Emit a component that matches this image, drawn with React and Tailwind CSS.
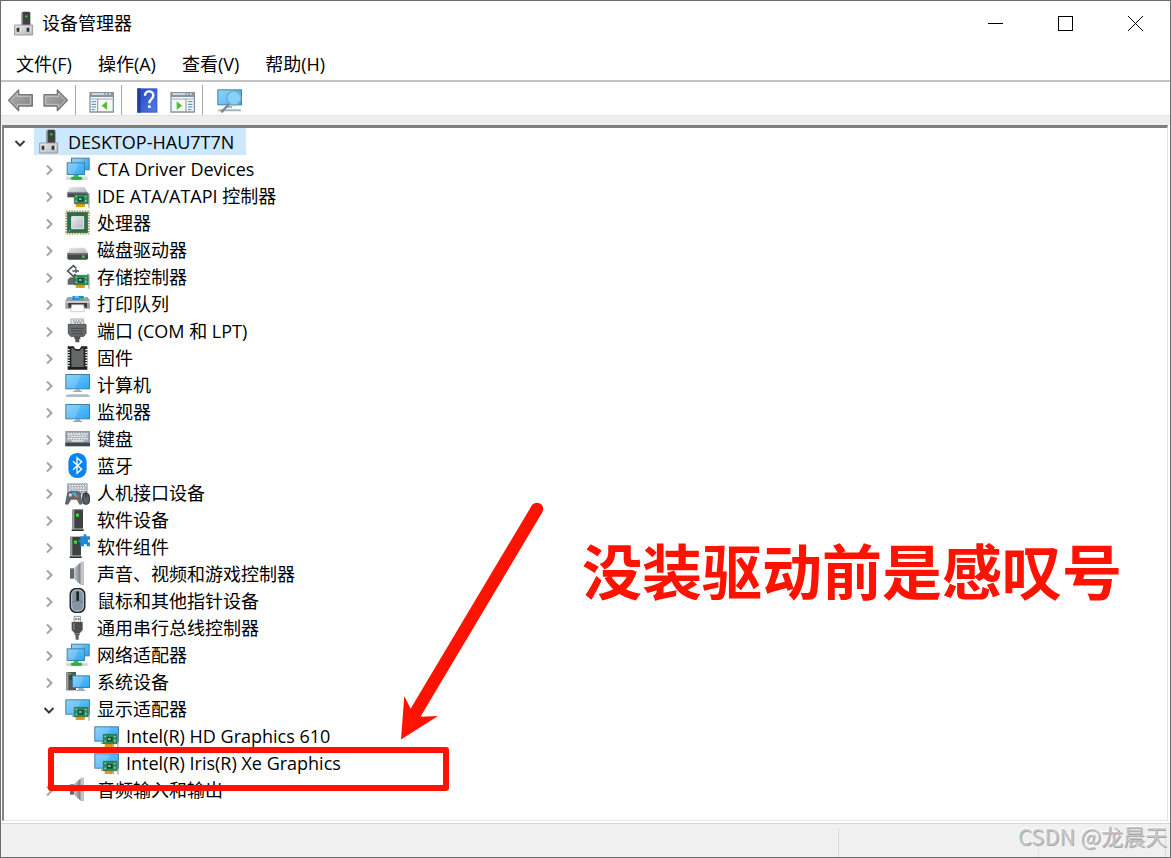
import { useState } from 'react';

const Icon = ({ children }) => (
  <svg viewBox="0 0 75 75" className="w-[25px] h-[25px] shrink-0" aria-hidden="true">
    {children}
  </svg>
);

const Screen = ({ x, y, w, h }) => (
  <>
    <rect x={x + 1.5} y={y + 1.5} width={w - 3} height={h - 3} fill="url(#screen)" stroke="#3f81a5" strokeWidth="3" />
    <path d={`M${x + 3} ${y + 3}h${w * 0.6}l-${w * 0.25} ${h - 6}h-${w * 0.35}z`} fill="#fff" opacity=".16" />
  </>
);

const Card = () => (
  <>
    <path d="M32 61h28v11H32z" fill="#f2a51c" />
    <path d="M38 63v9M45 63v9M52 63v9" stroke="#c97a08" strokeWidth="2" />
    <path d="M28 34h42v28H28z" fill="#2c8a5b" stroke="#1c6842" strokeWidth="2" />
    <path d="M39 42h17v14H39z" fill="#174c37" />
    <path d="M42 45h8v6h-8z" fill="#8bb3a0" />
    <path d="M31 38h5v4h-5zM31 53h5v4h-5zM60 39h5v4h-5zM60 50h5v6h-5z" fill="#7fd6a6" />
    <path d="M66 32h6v42" fill="none" stroke="#8b9299" strokeWidth="3" />
  </>
);

const ComputerIcon = () => (
  <Icon>
    <path d="M32 5l4-3h19l3 3v37H32z" fill="#3e4140" />
    <path d="M32 5l4-3v38h-4z" fill="#83878a" />
    <circle cx="46" cy="16" r="3.5" fill="#22d52e" />
    <path d="M11 42h54v30H11z" fill="url(#metal)" stroke="#989ca1" strokeWidth="3" />
    <path d="M17 50h9v12h-9zM47 50h9v12h-9z" fill="#343638" />
    <path d="M26 50h3v12h-3zM56 50h3v12h-3z" fill="#f6f6f6" />
  </Icon>
);

const NetworkIcon = () => (
  <Icon>
    <Screen x={18} y={5} w={56} h={38} />
    <Screen x={5} y={19} w={55} h={38} />
    <path d="M3 61h65v11H3z" fill="#d5d8da" />
    <path d="M3 61h65v3H3z" fill="#eef0f1" />
    <path d="M26 57h15v5h8l4 5-4 5H20l-4-5 4-5h6z" fill="#38bd53" />
    <path d="M22 66h26" stroke="#1b9a39" strokeWidth="3" />
  </Icon>
);

const IdeIcon = () => (
  <Icon>
    <path d="M15 12h44l9 16H7z" fill="url(#metal)" />
    <path d="M7 28h61v15H7z" fill="#474b4e" />
    <path d="M7 28h61v3H7z" fill="#85898c" />
    <Card />
  </Icon>
);

const CpuIcon = () => (
  <Icon>
    <rect x="3.5" y="4" width="69" height="67" fill="none" stroke="#c8a24c" strokeWidth="6" strokeDasharray="4 4" />
    <path d="M7 7h61v61H7z" fill="#2d6d50" stroke="#225940" strokeWidth="2" />
    <path d="M20 20h36v36H20z" fill="url(#metal)" stroke="#e9eeeb" strokeWidth="3" />
    <path d="M12 64l4-4" stroke="#d3c26c" strokeWidth="3" />
  </Icon>
);

const DiskIcon = () => (
  <Icon>
    <path d="M17 32h42l10 17H7z" fill="url(#metal)" />
    <path d="M7 49h62v16l-4 3H11l-4-3z" fill="#45494a" />
    <path d="M7 49h62v4H7z" fill="#75797a" />
    <circle cx="55" cy="59" r="4" fill="#34df42" />
  </Icon>
);

const StorageIcon = () => (
  <Icon>
    <path d="M8 47l8-7h20v22H8z" fill="#626668" />
    <path d="M34 13l-9-8L8 21l17 16 7-7" fill="none" stroke="#515456" strokeWidth="5" />
    <path d="M22 21h20M33 15v12" fill="none" stroke="#515456" strokeWidth="4" />
    <Card />
  </Icon>
);

const PrinterIcon = () => (
  <Icon>
    <path d="M23 15h33l4 17H19z" fill="#1687e9" />
    <path d="M30 15h10l3 7H28z" fill="#65c4ff" />
    <path d="M43 21h13l1 5H43z" fill="#31cb5c" />
    <path d="M8 18h12l3 9h33l4-9h8l7 11v24H1V29z" fill="#9ba1a6" />
    <path d="M1 30h74v6H1z" fill="#c7cbce" />
    <path d="M10 36h56v14H10z" fill="#373b3e" />
    <path d="M20 41h36l3 21H17z" fill="#fafafa" stroke="#b8bbbd" strokeWidth="2" />
  </Icon>
);

const PortIcon = () => (
  <Icon>
    <path d="M18 3h38v17H18z" fill="#eceeee" stroke="#a5a8aa" strokeWidth="3" />
    <path d="M24 9h4M32 9h4M40 9h4M48 9h4M28 14h4M36 14h4M44 14h4" stroke="#505355" strokeWidth="3" />
    <path d="M10 19h53v27l-7 9H17l-7-9z" fill="#6a6d6f" stroke="#4b4e50" strokeWidth="3" />
    <path d="M18 31h38M18 39h38M20 47h34" stroke="#45484a" strokeWidth="3" />
    <path d="M28 55h18v8h-3v10H31V63h-3z" fill="#505355" />
  </Icon>
);

const FirmwareIcon = () => (
  <Icon>
    <path d="M8 4h18l5 8h13l5-8h18v70H8z" fill="#1f2021" />
    <path d="M11 12v54M64 12v54" stroke="#fff" strokeWidth="6" strokeDasharray="4 4" />
    <path d="M19 10h6l6 7h13l6-7h6v56H19z" fill="#646667" />
  </Icon>
);

const DesktopIcon = () => (
  <Icon>
    <Screen x={1} y={6} w={74} h={46} />
    <path d="M31 52h14v4h6v4H24v-4h7z" fill="#9bb0bf" />
    <path d="M8 67h60l7 4-4 4H5l-4-4z" fill="#adbdca" />
  </Icon>
);

const MonitorIcon = () => (
  <Icon>
    <Screen x={1} y={15} w={74} h={46} />
    <path d="M31 61h14v4h6v4H24v-4h7z" fill="#91a6b5" />
  </Icon>
);

const KeyboardIcon = () => (
  <Icon>
    <path d="M1 15h74v45H1z" fill="#8d99a4" />
    <path d="M6 19h64v27H6z" fill="#aab4bc" />
    <path d="M8 24h60M11 31h55M8 38h60" stroke="#f5f7f8" strokeWidth="4" strokeDasharray="5 3" />
    <path d="M20 45h36" stroke="#fff" strokeWidth="3" />
    <path d="M1 50h74v11H1z" fill="#40464b" />
  </Icon>
);

const BluetoothIcon = () => (
  <Icon>
    <rect x="10" y="0" width="55" height="75" rx="26" fill="#0a83f5" />
    <path d="M24 25l26 24-14 12V14l14 12-26 24" fill="none" stroke="#fff" strokeWidth="4" />
  </Icon>
);

const HidIcon = () => (
  <Icon>
    <path d="M6 10h62v34H6z" fill="#a4adb5" />
    <path d="M12 17h52M14 24h49M12 31h52" stroke="#f8f8f8" strokeWidth="4" strokeDasharray="5 3" />
    <path d="M8 39l9-5h20l9 5 5 33-7 1-8-15H18l-9 15-8-1z" fill="#626970" stroke="#495057" strokeWidth="2" />
    <circle cx="16" cy="45" r="5" fill="#d3d7db" />
    <circle cx="28" cy="41" r="6" fill="#2dafec" />
    <circle cx="34" cy="48" r="4" fill="#ef7731" />
    <rect x="53" y="40" width="20" height="33" rx="9" fill="#586169" stroke="#292e32" strokeWidth="3" />
    <path d="M63 34v18" stroke="#252a2e" strokeWidth="3" />
  </Icon>
);

const SoftwareIcon = () => (
  <Icon>
    <path d="M22 8h32v57H22z" fill="#404343" />
    <path d="M22 8h6v58h-6z" fill="#9a9e9f" />
    <path d="M28 7h27v3H28z" fill="#6b6e6f" />
    <path d="M33 20h9v9h-9z" fill="#2ee83c" />
    <path d="M20 67h36v5H20z" fill="#2c2e2f" />
  </Icon>
);

const ComponentIcon = () => (
  <Icon>
    <path d="M16 8h32v57H16z" fill="#404343" />
    <path d="M16 8h6v58h-6z" fill="#9a9e9f" />
    <path d="M27 20h9v9h-9z" fill="#2ee83c" />
    <path d="M14 67h36v5H14z" fill="#2c2e2f" />
    <path d="M46 7h10V1h8v6h11v10h-6v8h6v12H65v-6h-8v6H46V25h-5v-8h5z" fill="#2388d0" />
  </Icon>
);

const SpeakerIcon = () => (
  <Icon>
    <path d="M15 22h12v31H15z" fill="#62686d" />
    <path d="M27 22L47 4v67L27 53z" fill="url(#cone)" />
    <path d="M48 2h8v70h-8z" fill="#9fa5aa" />
    <path d="M51 3v68" stroke="#e5e7e9" strokeWidth="3" />
  </Icon>
);

const MouseIcon = () => (
  <Icon>
    <rect x="16" y="2" width="43" height="71" rx="17" fill="#8494a2" stroke="#252729" strokeWidth="5" />
    <rect x="20" y="6" width="35" height="63" rx="14" fill="none" stroke="#bcc8d1" strokeWidth="3" />
    <path d="M20 44c11-7 24-7 35 0" fill="none" stroke="#5e6e7a" strokeWidth="2" />
    <rect x="34" y="10" width="8" height="29" rx="3" fill="#202325" />
  </Icon>
);

const UsbIcon = () => (
  <Icon>
    <path d="M27 4h20v18H27z" fill="#eceeee" stroke="#94989a" strokeWidth="3" />
    <path d="M31 10h4v5h-4zM39 10h4v5h-4z" fill="#555859" />
    <path d="M20 21h33v24l-9 10H29l-9-10z" fill="#4b4e4f" />
    <path d="M24 23h5v22h-5z" fill="#737778" />
    <path d="M29 55h15v6h-3v13h-9V61h-3z" fill="#5b5e60" />
  </Icon>
);

const SystemIcon = () => (
  <Icon>
    <path d="M4 9h29v55H4z" fill="#54585b" />
    <path d="M4 9h6v55H4z" fill="#989da0" />
    <path d="M13 22h17M13 29h17" stroke="#202224" strokeWidth="3" />
    <circle cx="15" cy="14" r="3" fill="#29db3b" />
    <Screen x={21} y={19} w={54} h={38} />
    <path d="M40 57h16v5h5v4H34v-4h6z" fill="#9aaebb" />
  </Icon>
);

const DisplayIcon = () => (
  <Icon>
    <Screen x={1} y={10} w={74} h={46} />
    <path d="M21 58h12v5H21z" fill="#90a5b3" />
    <Card />
  </Icon>
);

const Chevron = ({ open }) => (
  <svg viewBox="0 0 12 12" className="w-3 h-3" fill="none" aria-hidden="true">
    {open ? (
      <path d="M1.5 4l4.5 4.5L10.5 4" stroke="#3b3b3b" strokeWidth="2" />
    ) : (
      <path d="M4 1.5L8.5 6 4 10.5" stroke="#a3a3a3" strokeWidth="2" />
    )}
  </svg>
);

const devices = [
  { name: 'CTA Driver Devices', icon: NetworkIcon },
  { name: 'IDE ATA/ATAPI 控制器', icon: IdeIcon },
  { name: '处理器', icon: CpuIcon },
  { name: '磁盘驱动器', icon: DiskIcon },
  { name: '存储控制器', icon: StorageIcon },
  { name: '打印队列', icon: PrinterIcon },
  { name: '端口 (COM 和 LPT)', icon: PortIcon },
  { name: '固件', icon: FirmwareIcon },
  { name: '计算机', icon: DesktopIcon },
  { name: '监视器', icon: MonitorIcon },
  { name: '键盘', icon: KeyboardIcon },
  { name: '蓝牙', icon: BluetoothIcon },
  { name: '人机接口设备', icon: HidIcon },
  { name: '软件设备', icon: SoftwareIcon },
  { name: '软件组件', icon: ComponentIcon },
  { name: '声音、视频和游戏控制器', icon: SpeakerIcon },
  { name: '鼠标和其他指针设备', icon: MouseIcon },
  { name: '通用串行总线控制器', icon: UsbIcon },
  { name: '网络适配器', icon: NetworkIcon },
  { name: '系统设备', icon: SystemIcon },
  {
    name: '显示适配器',
    icon: DisplayIcon,
    open: true,
    children: [
      { name: 'Intel(R) HD Graphics 610', icon: DisplayIcon, leaf: true },
      { name: 'Intel(R) Iris(R) Xe Graphics', icon: DisplayIcon, leaf: true },
    ],
  },
  { name: '音频输入和输出', icon: SpeakerIcon },
];

function TreeNode({ node, selected }) {
  const [open, setOpen] = useState(Boolean(node.open));
  const NodeIcon = node.icon;

  return (
    <li>
      <div className="flex h-[27px] items-center">
        {node.leaf ? (
          <span className="w-[29px]" />
        ) : (
          <button
            type="button"
            aria-label={open ? '折叠' : '展开'}
            onClick={() => setOpen(!open)}
            className="flex h-full w-[29px] items-center justify-center pt-0.5"
          >
            <Chevron open={open} />
          </button>
        )}
        <div className={`flex h-full items-center gap-[7px] pl-0.5 pr-3 ${selected ? 'bg-[#cce8ff]' : ''}`}>
          <NodeIcon />
          <span className="whitespace-nowrap pt-0.5 leading-[27px]">{node.name}</span>
        </div>
      </div>
      {open && node.children && (
        <ul className="pl-[29px]">
          {node.children.map((child) => (
            <TreeNode key={child.name} node={child} />
          ))}
        </ul>
      )}
    </li>
  );
}

const ArrowIcon = ({ flip }) => (
  <Icon>
    <path
      d={flip ? 'M73 37L43 6v14H3v34h40v14z' : 'M2 37L32 6v14h41v34H32v14z'}
      fill="url(#arrow)"
      stroke="#777"
      strokeWidth="4"
      strokeLinejoin="round"
    />
    <path
      d={flip ? 'M67 37L47 16v9H8v24h39v9z' : 'M8 37l20-21v9h40v24H28v9z'}
      fill="none"
      stroke="#c4c4c4"
      strokeWidth="3"
    />
  </Icon>
);

const PanelIcon = ({ right }) => (
  <Icon>
    <path d="M3 14h70v58H3z" fill="#f5f7f8" stroke="#89939d" strokeWidth="4" />
    <path d="M3 13h70v14H3z" fill="#89939d" />
    <path d="M8 18h38M50 18h5M60 18h5" stroke="#e9edef" strokeWidth="4" />
    <path d="M5 30h66v6H5z" fill="#c9cfd5" />
    {right ? (
      <>
        <path d="M48 33v38" stroke="#89939d" strokeWidth="3" />
        <path d="M54 41h13M54 49h13M54 57h13M54 65h10" stroke="#4d86b5" strokeWidth="3" />
        <path d="M20 40v25l16-12z" fill="#51bf2d" />
      </>
    ) : (
      <>
        <path d="M26 33v38" stroke="#89939d" strokeWidth="3" />
        <path d="M8 41h13M8 49h13M8 57h13M8 65h10" stroke="#4d86b5" strokeWidth="3" />
        <path d="M54 40v25L38 53z" fill="#51bf2d" />
      </>
    )}
  </Icon>
);

const HelpIcon = () => (
  <Icon>
    <path d="M7 1h60v73H7z" fill="#3159c9" />
    <path d="M7 1h10v73H7z" fill="#203e9b" />
    <path d="M17 4h47v67H17z" fill="url(#help)" />
    <path d="M30 23c0-17 25-17 25-1 0 12-12 11-12 24" fill="none" stroke="#fff" strokeWidth="7" />
    <path d="M39 52h8v8h-8z" fill="#fff" />
  </Icon>
);

const ScanIcon = () => (
  <Icon>
    <Screen x={1} y={4} w={74} h={48} />
    <path d="M28 53h17v7H28zM6 64h64l4 6H2z" fill="#a2b5c2" />
    <path d="M37 47L13 73" stroke="#7c8790" strokeWidth="7" />
    <circle cx="51" cy="30" r="21" fill="#8fd6fb" opacity=".85" />
    <circle cx="51" cy="30" r="21" fill="none" stroke="#80a9c0" strokeWidth="4" />
  </Icon>
);

const ToolButton = ({ label, children }) => (
  <button type="button" aria-label={label} className="flex items-center">
    {children}
  </button>
);

const Divider = () => <span className="w-px self-stretch bg-[#a9a9a9]" />;

export default function App() {
  const root = { name: 'DESKTOP-HAU7T7N', icon: ComputerIcon, open: true, children: devices };

  return (
    <div className="flex min-h-screen flex-col border border-[#6c6c6c] bg-white font-['Open_Sans','Noto_Sans_CJK_SC',sans-serif] text-[18px] text-black">
      <svg className="absolute h-0 w-0" aria-hidden="true">
        <defs>
          <linearGradient id="screen" x1="0" y1="0" x2="1" y2="1">
            <stop offset="0" stopColor="#79c9f8" />
            <stop offset="1" stopColor="#2ba6f7" />
          </linearGradient>
          <linearGradient id="metal" x1="0" y1="0" x2="1" y2="1">
            <stop offset="0" stopColor="#e8eaec" />
            <stop offset="1" stopColor="#b4b8bb" />
          </linearGradient>
          <linearGradient id="cone">
            <stop offset="0" stopColor="#c9cdd0" />
            <stop offset="1" stopColor="#737a80" />
          </linearGradient>
          <linearGradient id="arrow" x1="0" y1="0" x2="1" y2="1">
            <stop offset="0" stopColor="#b0b0b0" />
            <stop offset="1" stopColor="#808080" />
          </linearGradient>
          <linearGradient id="help" x1="0" y1="0" x2="1" y2="1">
            <stop offset="0" stopColor="#2b4bbd" />
            <stop offset="1" stopColor="#4f7be6" />
          </linearGradient>
        </defs>
      </svg>

      {/* Title bar */}
      <header className="flex h-[45px] items-center">
        <div className="flex flex-1 items-center gap-1.5 pl-2.5">
          <ComputerIcon />
          <h1>设备管理器</h1>
        </div>
        <div className="flex h-full">
          <button type="button" aria-label="最小化" className="flex w-[70px] items-center justify-center">
            <span className="h-px w-[15px] bg-black" />
          </button>
          <button type="button" aria-label="最大化" className="flex w-[70px] items-center justify-center">
            <span className="h-[15px] w-[15px] border border-black" />
          </button>
          <button type="button" aria-label="关闭" className="flex w-[70px] items-center justify-center">
            <svg viewBox="0 0 15 15" className="h-[15px] w-[15px]" stroke="#000" aria-hidden="true">
              <path d="M0 0l15 15M15 0L0 15" />
            </svg>
          </button>
        </div>
      </header>

      <nav className="flex h-[36px] items-center gap-[26px] border-b-2 border-[#c3c3c3] pt-0.5 pl-[15px]">
        <button type="button">文件(F)</button>
        <button type="button">操作(A)</button>
        <button type="button">查看(V)</button>
        <button type="button">帮助(H)</button>
      </nav>

      {/* Toolbar */}
      <div className="flex h-[33px] items-center pt-[3px] pl-[7px]">
        <div className="flex gap-2.5 pr-[7px]">
          <ToolButton label="后退"><ArrowIcon /></ToolButton>
          <ToolButton label="前进"><ArrowIcon flip /></ToolButton>
        </div>
        <Divider />
        <div className="flex pr-[7px] pl-[13px]">
          <ToolButton label="显示/隐藏控制台树"><PanelIcon /></ToolButton>
        </div>
        <Divider />
        <div className="flex gap-2.5 pr-[7px] pl-[13px]">
          <ToolButton label="帮助"><HelpIcon /></ToolButton>
          <ToolButton label="显示/隐藏操作窗格"><PanelIcon right /></ToolButton>
        </div>
        <Divider />
        <div className="flex pl-[14px]">
          <ToolButton label="扫描检测硬件改动"><ScanIcon /></ToolButton>
        </div>
      </div>
      <div className="h-[10px] border-t border-[#e3e3e3] bg-[#eeeeee]" />

      {/* Device tree */}
      <main className="relative mr-0.5 ml-px flex-1 border-t-3 border-r border-b border-l-2 border-t-[#7f7f7f] border-r-[#e3e3e3] border-b-[#e3e3e3] border-l-[#858585] pl-px">
        <ul>
          <TreeNode node={root} selected />
        </ul>

        <p className="absolute top-[400px] left-[578px] text-[60px] leading-[88px] font-bold whitespace-nowrap text-[#ff1200]">
          没装驱动前是感叹号
        </p>
        <svg viewBox="0 0 150 245" className="absolute top-[370px] left-[393px] h-[245px] w-[150px]" aria-hidden="true">
          <path d="M140 11L16 219" stroke="#ff1200" strokeWidth="12.5" />
          <circle cx="140" cy="11" r="6.2" fill="#ff1200" />
          <path d="M4 241.5L7.3 198l7 14 10.4 6.7 16.300-.7z" fill="#ff1200" />
        </svg>
        <div className="absolute top-[619px] left-[44px] h-[44px] w-[401px] rounded-[3px] border-6 border-[#ff1200]" />
      </main>

      <footer className="relative mt-0.5 flex h-[34px] border-t border-[#d7d7d7] bg-[#f0f0f0] pt-1">
        <span className="flex-1 border-r border-[#dcdcdc]" />
        <span className="w-[200px] border-r border-[#e4e4e4]" />
        <span className="w-[127px] border-r border-[#dcdcdc]" />
        <span className="w-1" />
        <p className="absolute right-[3px] bottom-1.5 font-['Noto_Sans_CJK_SC',sans-serif] text-[22px] leading-8 whitespace-nowrap text-[#c6c6c6] [text-shadow:1px_1px_0_#a8a8a8,-1px_-1px_0_#fff]">
          CSDN @龙晨天
        </p>
      </footer>
    </div>
  );
}
